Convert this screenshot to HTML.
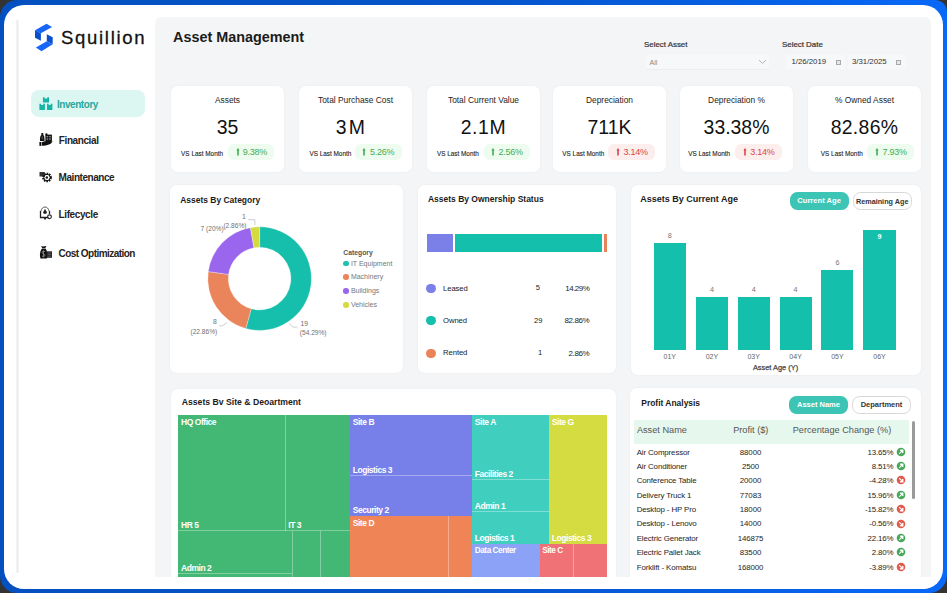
<!DOCTYPE html>
<html><head><meta charset="utf-8"><style>
html,body{margin:0;padding:0;}
body{width:947px;height:593px;position:relative;overflow:hidden;background:#333;font-family:"Liberation Sans", sans-serif;}
.t{position:absolute;line-height:1.15;white-space:nowrap;}
#frame{position:absolute;left:0;top:0;width:947px;height:593px;border-radius:17px 12px 18px 17px;background:linear-gradient(90deg,#0450c0 0%,#0554cb 50%,#0660e4 80%,#0868f8 100%);}
#inner{position:absolute;left:4px;top:4.5px;width:939px;height:584.5px;border-radius:20px;background:#ffffff;}
</style></head><body>
<div id="frame"></div>
<div id="inner"></div>
<div style="position:absolute;left:16.00px;top:20.00px;width:3.00px;height:553.00px;background:linear-gradient(90deg,#f7f7f7,#ebebeb 45%,#f8f8f8);border-radius:0 0 2px 2px;"></div>
<div style="position:absolute;left:155.00px;top:17.00px;width:776.00px;height:560.00px;background:#f4f5f7;border-radius:6px 6px 0 0;"></div>
<svg style="position:absolute;left:30px;top:20px" width="30" height="35" viewBox="0 0 30 35">
<path d="M5,10.3 L16.5,3.8 L22.1,7.1 L10.9,13.3 Z" fill="#1766f5"/>
<path d="M5,10.3 L10.9,13.3 L10.9,20.7 L5,17.7 Z" fill="#0b4fcc"/>
<path d="M16.8,14.2 L22.7,17.3 L22.7,24.3 L16.8,21.2 Z" fill="#0b4fcc"/>
<path d="M5.9,27.5 L16.8,21.2 L22.7,24.3 L11.5,31.3 Z" fill="#1766f5"/>
</svg>
<div class="t" style="left:61.00px;top:27.20px;font-size:18.5px;font-weight:400;color:#111111;letter-spacing:1.7px;-webkit-text-stroke:0.3px #111;">Squillion</div>
<div style="position:absolute;left:31.00px;top:90.00px;width:114.00px;height:27.00px;background:#dcf6f2;border-radius:8px;"></div>
<svg style="position:absolute;left:36px;top:94px" width="20" height="20" viewBox="0 0 20 20">
<g fill="#17b5a5">
<path d="M6.9,3.2 H8.6 V4.4 H11.3 V3.2 H13 V8.4 H6.9 Z"/>
<path d="M3.4,9.8 H5.1 V11 H7.2 V9.8 H8.9 V15.9 H3.4 Z"/>
<path d="M11,9.8 H12.7 V11 H14.7 V9.8 H16.4 V15.9 H11 Z"/>
</g></svg>
<div class="t" style="left:57.00px;top:98.73px;font-size:10px;font-weight:700;color:#2aa89d;letter-spacing:-0.45px;">Inventory</div>
<svg style="position:absolute;left:36px;top:129px" width="20" height="20" viewBox="0 0 20 20">
<g fill="#111">
<path d="M5.4,4 H7.3 V6 C8.3,6.8 8.6,8.2 8.5,12 H4 C3.9,8.2 4.3,6.8 5.4,6 Z"/>
<circle cx="10.4" cy="5.4" r="1.1"/>
<path d="M9.4,5.6 H15.9 V12 H9.4 Z"/>
<path d="M3.4,13 H5.1 V16.9 H3.4 Z"/>
<path d="M5.6,13.2 C8.5,11.8 12.5,11.6 16.5,12.3 C15.5,15.2 11.5,16.8 5.6,16.8 Z"/>
</g>
<path d="M6.2,7.4 V10.2" stroke="#888" stroke-width="0.7"/>
<g fill="#8a8a8a"><rect x="10.6" y="7" width="1.6" height="1.4"/><rect x="13.2" y="7" width="1.6" height="1.4"/><rect x="10.6" y="9.4" width="1.6" height="1.4"/><rect x="13.2" y="9.4" width="1.6" height="1.4"/></g>
</svg>
<div class="t" style="left:58.80px;top:134.73px;font-size:10px;font-weight:700;color:#252423;letter-spacing:-0.4px;">Financial</div>
<svg style="position:absolute;left:36px;top:166px" width="20" height="20" viewBox="0 0 20 20">
<path d="M3.5,6 H8.8 V10.5 H3.5 Z" fill="#333"/>
<circle cx="11" cy="11.5" r="3.9" fill="none" stroke="#111" stroke-width="1.9" stroke-dasharray="1.6 0.9"/>
<circle cx="11" cy="11.5" r="3.2" fill="none" stroke="#111" stroke-width="1"/>
<circle cx="10.8" cy="11.5" r="1.2" fill="#111"/>
</svg>
<div class="t" style="left:58.60px;top:171.93px;font-size:10px;font-weight:700;color:#252423;letter-spacing:-0.45px;">Maintenance</div>
<svg style="position:absolute;left:36px;top:203px" width="20" height="20" viewBox="0 0 20 20">
<path d="M5,8 C5.5,5.5 7,4 9,4 C11,4 12.5,5.5 13,8" fill="none" stroke="#444" stroke-width="0.9"/>
<path d="M4.5,8 V14.5 H12.5" fill="none" stroke="#222" stroke-width="1.3"/>
<path d="M13.5,8 V11" fill="none" stroke="#222" stroke-width="1.3"/>
<circle cx="9" cy="9.3" r="1.8" fill="#222"/><path d="M8.2,6.5 H9.8 V8 H8.2Z" fill="#222"/>
<circle cx="13.5" cy="13.8" r="1.9" fill="none" stroke="#222" stroke-width="1.1"/>
<rect x="8" y="14.8" width="2" height="1.6" fill="#222"/>
</svg>
<div class="t" style="left:58.60px;top:208.83px;font-size:10px;font-weight:700;color:#252423;letter-spacing:-0.4px;">Lifecycle</div>
<svg style="position:absolute;left:36px;top:242px" width="20" height="20" viewBox="0 0 20 20">
<path d="M5,4 C6,4.6 8,4.6 10.5,4 L9.3,6 H6.2 Z" fill="#111"/>
<path d="M6,6.5 H9.5 C11.5,8.5 11.5,14 10.8,16.5 H4.5 C3.5,14 3.8,9 6,6.5 Z" fill="#111"/>
<path d="M9,9.9 C8.6,9 6.1,9 6.1,10.5 C6.1,12 9,11.7 9,13.3 C9,14.8 6.3,14.8 5.9,13.8 M7.5,8.4 V15.4" fill="none" stroke="#8a8a8a" stroke-width="0.9"/>
<path d="M10.8,9.3 H16 V15.8 H10.8 Z" fill="#222"/>
<path d="M11.5,10.8 H15.3 M11.5,12.5 H15.3 M11.5,14.2 H15.3" stroke="#777" stroke-width="0.6"/>
</svg>
<div class="t" style="left:58.60px;top:247.63px;font-size:10px;font-weight:700;color:#252423;letter-spacing:-0.55px;">Cost Optimization</div>
<div class="t" style="left:173.00px;top:29.48px;font-size:14.4px;font-weight:700;color:#1b1b1b;">Asset Management</div>
<div class="t" style="left:644.00px;top:40.20px;font-size:7.9px;font-weight:400;color:#333;-webkit-text-stroke:0.2px #333;">Select Asset</div>
<div style="position:absolute;left:646.00px;top:54.50px;width:122.50px;height:14.00px;background:#f7f8fa;border-bottom:1px solid #eceef0;"></div>
<div class="t" style="left:649.50px;top:58.70px;font-size:7px;font-weight:400;color:#8a8a8a;">All</div>
<svg style="position:absolute;left:758px;top:59px" width="9" height="6" viewBox="0 0 9 6"><path d="M1,1 L4.5,4.5 L8,1" fill="none" stroke="#aaa" stroke-width="0.9"/></svg>
<div class="t" style="left:782.00px;top:39.70px;font-size:7.9px;font-weight:400;color:#333;-webkit-text-stroke:0.2px #333;">Select Date</div>
<div style="position:absolute;left:786.00px;top:54.50px;width:58.50px;height:14.50px;background:#f7f8fa;"></div>
<div style="position:absolute;left:847.50px;top:54.50px;width:58.00px;height:14.50px;background:#f7f8fa;"></div>
<div class="t" style="left:791.40px;top:58.46px;font-size:7.8px;font-weight:400;color:#333;">1/26/2019</div>
<div class="t" style="left:852.00px;top:58.46px;font-size:7.8px;font-weight:400;color:#333;">3/31/2025</div>
<div style="position:absolute;left:835.6px;top:59.8px;width:5.4px;height:5.4px;box-sizing:border-box;border:0.9px solid #a9a9a9;background:#e6e6e6;"></div>
<div style="position:absolute;left:896.1px;top:59.8px;width:5.4px;height:5.4px;box-sizing:border-box;border:0.9px solid #a9a9a9;background:#e6e6e6;"></div>
<div style="position:absolute;left:171.00px;top:86.00px;width:113.00px;height:85.50px;background:#ffffff;border-radius:7px;box-shadow:0 0 3px rgba(0,0,0,0.045);"></div>
<div class="t" style="left:-72.50px;width:600px;text-align:center;top:95.52px;font-size:8.4px;font-weight:400;color:#252423;">Assets</div>
<div class="t" style="left:-72.50px;width:600px;text-align:center;top:115.59px;font-size:19.4px;font-weight:400;color:#111;letter-spacing:0px;">35</div>
<div class="t" style="left:181.10px;top:149.94px;font-size:6.4px;font-weight:400;color:#222;-webkit-text-stroke:0.1px #222;">VS Last Month</div>
<div style="position:absolute;left:227.50px;top:144.20px;width:46.50px;height:16.30px;background:#eefbef;border-radius:6px;"></div>
<svg style="position:absolute;left:235.50px;top:147.6px" width="4" height="8" viewBox="0 0 4 8"><path d="M2,0 L3.6,2.6 L2.8,2.6 L2.8,7.5 L1.2,7.5 L1.2,2.6 L0.4,2.6 Z" fill="#3fae53"/></svg>
<div class="t" style="left:242.80px;top:147.19px;font-size:9px;font-weight:400;color:#3fae53;letter-spacing:-0.25px;">9.38%</div>
<div style="position:absolute;left:299.00px;top:86.00px;width:113.00px;height:85.50px;background:#ffffff;border-radius:7px;box-shadow:0 0 3px rgba(0,0,0,0.045);"></div>
<div class="t" style="left:55.50px;width:600px;text-align:center;top:95.52px;font-size:8.4px;font-weight:400;color:#252423;">Total Purchase Cost</div>
<div class="t" style="left:51.50px;width:600px;text-align:center;top:115.59px;font-size:19.4px;font-weight:400;color:#111;letter-spacing:2.4px;">3M</div>
<div class="t" style="left:309.40px;top:149.94px;font-size:6.4px;font-weight:400;color:#222;-webkit-text-stroke:0.1px #222;">VS Last Month</div>
<div style="position:absolute;left:355.10px;top:144.20px;width:46.50px;height:16.30px;background:#eefbef;border-radius:6px;"></div>
<svg style="position:absolute;left:362.20px;top:147.6px" width="4" height="8" viewBox="0 0 4 8"><path d="M2,0 L3.6,2.6 L2.8,2.6 L2.8,7.5 L1.2,7.5 L1.2,2.6 L0.4,2.6 Z" fill="#3fae53"/></svg>
<div class="t" style="left:370.00px;top:147.19px;font-size:9px;font-weight:400;color:#3fae53;letter-spacing:-0.25px;">5.26%</div>
<div style="position:absolute;left:427.00px;top:86.00px;width:113.00px;height:85.50px;background:#ffffff;border-radius:7px;box-shadow:0 0 3px rgba(0,0,0,0.045);"></div>
<div class="t" style="left:183.50px;width:600px;text-align:center;top:95.52px;font-size:8.4px;font-weight:400;color:#252423;">Total Current Value</div>
<div class="t" style="left:183.40px;width:600px;text-align:center;top:115.59px;font-size:19.4px;font-weight:400;color:#111;letter-spacing:0.6px;">2.1M</div>
<div class="t" style="left:436.90px;top:149.94px;font-size:6.4px;font-weight:400;color:#222;-webkit-text-stroke:0.1px #222;">VS Last Month</div>
<div style="position:absolute;left:483.80px;top:144.20px;width:46.50px;height:16.30px;background:#eefbef;border-radius:6px;"></div>
<svg style="position:absolute;left:490.90px;top:147.6px" width="4" height="8" viewBox="0 0 4 8"><path d="M2,0 L3.6,2.6 L2.8,2.6 L2.8,7.5 L1.2,7.5 L1.2,2.6 L0.4,2.6 Z" fill="#3fae53"/></svg>
<div class="t" style="left:498.50px;top:147.19px;font-size:9px;font-weight:400;color:#3fae53;letter-spacing:-0.25px;">2.56%</div>
<div style="position:absolute;left:553.00px;top:86.00px;width:113.00px;height:85.50px;background:#ffffff;border-radius:7px;box-shadow:0 0 3px rgba(0,0,0,0.045);"></div>
<div class="t" style="left:309.50px;width:600px;text-align:center;top:95.52px;font-size:8.4px;font-weight:400;color:#252423;">Depreciation</div>
<div class="t" style="left:309.50px;width:600px;text-align:center;top:115.59px;font-size:19.4px;font-weight:400;color:#111;letter-spacing:0px;">711K</div>
<div class="t" style="left:562.30px;top:149.94px;font-size:6.4px;font-weight:400;color:#222;-webkit-text-stroke:0.1px #222;">VS Last Month</div>
<div style="position:absolute;left:608.00px;top:144.20px;width:46.50px;height:16.30px;background:#fdeeee;border-radius:6px;"></div>
<svg style="position:absolute;left:616.30px;top:147.6px" width="4" height="8" viewBox="0 0 4 8"><path d="M2,0 L3.6,2.6 L2.8,2.6 L2.8,7.5 L1.2,7.5 L1.2,2.6 L0.4,2.6 Z" fill="#d6474a"/></svg>
<div class="t" style="left:623.50px;top:147.19px;font-size:9px;font-weight:400;color:#d6474a;letter-spacing:-0.25px;">3.14%</div>
<div style="position:absolute;left:680.00px;top:86.00px;width:113.00px;height:85.50px;background:#ffffff;border-radius:7px;box-shadow:0 0 3px rgba(0,0,0,0.045);"></div>
<div class="t" style="left:436.50px;width:600px;text-align:center;top:95.52px;font-size:8.4px;font-weight:400;color:#252423;">Depreciation %</div>
<div class="t" style="left:436.50px;width:600px;text-align:center;top:115.59px;font-size:19.4px;font-weight:400;color:#111;letter-spacing:0px;">33.38%</div>
<div class="t" style="left:688.20px;top:149.94px;font-size:6.4px;font-weight:400;color:#222;-webkit-text-stroke:0.1px #222;">VS Last Month</div>
<div style="position:absolute;left:735.30px;top:144.20px;width:46.50px;height:16.30px;background:#fdeeee;border-radius:6px;"></div>
<svg style="position:absolute;left:743.40px;top:147.6px" width="4" height="8" viewBox="0 0 4 8"><path d="M2,0 L3.6,2.6 L2.8,2.6 L2.8,7.5 L1.2,7.5 L1.2,2.6 L0.4,2.6 Z" fill="#d6474a"/></svg>
<div class="t" style="left:750.20px;top:147.19px;font-size:9px;font-weight:400;color:#d6474a;letter-spacing:-0.25px;">3.14%</div>
<div style="position:absolute;left:808.00px;top:86.00px;width:113.00px;height:85.50px;background:#ffffff;border-radius:7px;box-shadow:0 0 3px rgba(0,0,0,0.045);"></div>
<div class="t" style="left:564.50px;width:600px;text-align:center;top:95.52px;font-size:8.4px;font-weight:400;color:#252423;">% Owned Asset</div>
<div class="t" style="left:564.50px;width:600px;text-align:center;top:115.59px;font-size:19.4px;font-weight:400;color:#111;letter-spacing:0.3px;">82.86%</div>
<div class="t" style="left:820.80px;top:149.94px;font-size:6.4px;font-weight:400;color:#222;-webkit-text-stroke:0.1px #222;">VS Last Month</div>
<div style="position:absolute;left:867.30px;top:144.20px;width:46.50px;height:16.30px;background:#eefbef;border-radius:6px;"></div>
<svg style="position:absolute;left:875.40px;top:147.6px" width="4" height="8" viewBox="0 0 4 8"><path d="M2,0 L3.6,2.6 L2.8,2.6 L2.8,7.5 L1.2,7.5 L1.2,2.6 L0.4,2.6 Z" fill="#3fae53"/></svg>
<div class="t" style="left:882.50px;top:147.19px;font-size:9px;font-weight:400;color:#3fae53;letter-spacing:-0.25px;">7.93%</div>
<div style="position:absolute;left:170.00px;top:185.00px;width:233.00px;height:188.00px;background:#ffffff;border-radius:7px;box-shadow:0 0 3px rgba(0,0,0,0.045);"></div>
<div class="t" style="left:180.20px;top:196.28px;font-size:8.47px;font-weight:700;color:#1b1b1b;">Assets By Category</div>
<svg style="position:absolute;left:0;top:0" width="947" height="593"><path d="M259.60,226.80 A51.8,51.8 0 1 1 245.81,328.53 L251.26,308.77 A31.3,31.3 0 1 0 259.60,247.30 Z" fill="#16bfab" stroke="#fff" stroke-width="0.3"/><path d="M245.81,328.53 A51.8,51.8 0 0 1 208.27,271.62 L228.59,274.38 A31.3,31.3 0 0 0 251.26,308.77 Z" fill="#ea845a" stroke="#fff" stroke-width="0.3"/><path d="M208.27,271.62 A51.8,51.8 0 0 1 250.37,227.63 L254.02,247.80 A31.3,31.3 0 0 0 228.59,274.38 Z" fill="#9a66ee" stroke="#fff" stroke-width="0.3"/><path d="M250.37,227.63 A51.8,51.8 0 0 1 259.63,226.80 L259.62,247.30 A31.3,31.3 0 0 0 254.02,247.80 Z" fill="#d5db3f" stroke="#fff" stroke-width="0.3"/><path d="M248.2,219.7 H254.9 V225" fill="none" stroke="#aaa" stroke-width="0.6"/>
<path d="M219.1,325.8 H222.5 L227,322.7" fill="none" stroke="#aaa" stroke-width="0.6"/>
<path d="M288.8,323.5 L293,327.1 H297.5" fill="none" stroke="#aaa" stroke-width="0.6"/></svg>
<div class="t" style="left:-56.00px;width:600px;text-align:center;top:213.11px;font-size:6.8px;font-weight:400;color:#707070;">1</div>
<div class="t" style="left:200.60px;top:224.62px;font-size:6.6px;font-weight:400;color:#707070;">7 (20%)</div>
<div class="t" style="left:223.40px;top:221.82px;font-size:6.6px;font-weight:400;color:#707070;">(2.86%)</div>
<div class="t" style="left:-85.20px;width:600px;text-align:center;top:318.21px;font-size:6.8px;font-weight:400;color:#707070;">8</div>
<div class="t" style="left:190.50px;top:327.82px;font-size:6.6px;font-weight:400;color:#707070;">(22.86%)</div>
<div class="t" style="left:300.40px;top:319.81px;font-size:6.8px;font-weight:400;color:#707070;">19</div>
<div class="t" style="left:299.80px;top:328.62px;font-size:6.6px;font-weight:400;color:#707070;">(54.29%)</div>
<div class="t" style="left:343.30px;top:248.51px;font-size:6.8px;font-weight:700;color:#555;">Category</div>
<div style="position:absolute;left:343.40px;top:260.60px;width:5.6px;height:5.6px;border-radius:50%;background:#1dbfad"></div>
<div class="t" style="left:350.90px;top:259.50px;font-size:7px;font-weight:400;color:#777;">IT Equipment</div>
<div style="position:absolute;left:343.40px;top:274.30px;width:5.6px;height:5.6px;border-radius:50%;background:#ea845a"></div>
<div class="t" style="left:350.90px;top:273.20px;font-size:7px;font-weight:400;color:#777;">Machinery</div>
<div style="position:absolute;left:343.40px;top:288.20px;width:5.6px;height:5.6px;border-radius:50%;background:#9a66ee"></div>
<div class="t" style="left:350.90px;top:287.10px;font-size:7px;font-weight:400;color:#777;">Buildings</div>
<div style="position:absolute;left:343.40px;top:302.00px;width:5.6px;height:5.6px;border-radius:50%;background:#d5db3f"></div>
<div class="t" style="left:350.90px;top:300.90px;font-size:7px;font-weight:400;color:#777;">Vehicles</div>
<div style="position:absolute;left:417.50px;top:185.00px;width:198.50px;height:187.50px;background:#ffffff;border-radius:7px;box-shadow:0 0 3px rgba(0,0,0,0.045);"></div>
<div class="t" style="left:427.90px;top:195.27px;font-size:8.5px;font-weight:700;color:#1b1b1b;">Assets By Ownership Status</div>
<div style="position:absolute;left:427.20px;top:233.80px;width:25.80px;height:18.20px;background:#7b7fe8;"></div>
<div style="position:absolute;left:454.50px;top:233.80px;width:147.70px;height:18.20px;background:#14bfac;"></div>
<div style="position:absolute;left:603.90px;top:233.80px;width:3.60px;height:18.20px;background:#e9845a;"></div>
<div style="position:absolute;left:426.30px;top:283.80px;width:9.4px;height:9.4px;border-radius:50%;background:#7b7fe8"></div>
<div class="t" style="left:443.10px;top:284.51px;font-size:7.7px;font-weight:400;color:#1a1a1a;letter-spacing:-0.1px;">Leased</div>
<div class="t" style="left:237.90px;width:600px;text-align:center;top:284.37px;font-size:7.6px;font-weight:400;color:#252423;">5</div>
<div class="t" style="left:-10.80px;width:600px;text-align:right;top:283.94px;font-size:8.0px;font-weight:400;color:#252423;letter-spacing:-0.55px;">14.29%</div>
<div style="position:absolute;left:426.30px;top:316.10px;width:9.4px;height:9.4px;border-radius:50%;background:#14bfac"></div>
<div class="t" style="left:443.10px;top:316.81px;font-size:7.7px;font-weight:400;color:#1a1a1a;letter-spacing:-0.1px;">Owned</div>
<div class="t" style="left:238.30px;width:600px;text-align:center;top:316.67px;font-size:7.6px;font-weight:400;color:#252423;">29</div>
<div class="t" style="left:-10.80px;width:600px;text-align:right;top:316.24px;font-size:8.0px;font-weight:400;color:#252423;letter-spacing:-0.4px;">82.86%</div>
<div style="position:absolute;left:426.30px;top:348.50px;width:9.4px;height:9.4px;border-radius:50%;background:#e9845a"></div>
<div class="t" style="left:443.10px;top:349.21px;font-size:7.7px;font-weight:400;color:#1a1a1a;letter-spacing:-0.1px;">Rented</div>
<div class="t" style="left:240.20px;width:600px;text-align:center;top:349.07px;font-size:7.6px;font-weight:400;color:#252423;">1</div>
<div class="t" style="left:-10.80px;width:600px;text-align:right;top:348.64px;font-size:8.0px;font-weight:400;color:#252423;letter-spacing:-0.4px;">2.86%</div>
<div style="position:absolute;left:631.00px;top:185.00px;width:290.30px;height:189.50px;background:#ffffff;border-radius:7px;box-shadow:0 0 3px rgba(0,0,0,0.045);"></div>
<div class="t" style="left:640.20px;top:194.49px;font-size:9px;font-weight:700;color:#1b1b1b;">Assets By Current Age</div>
<div style="position:absolute;left:789.60px;top:191.80px;width:59.00px;height:17.90px;background:#3cc4b4;border-radius:7.5px;"></div>
<div class="t" style="left:519.10px;width:600px;text-align:center;top:197.37px;font-size:7.6px;font-weight:700;color:#ffffff;">Current Age</div>
<div style="position:absolute;left:852.70px;top:191.80px;width:59.00px;height:17.90px;background:#ffffff;border-radius:7.5px;box-sizing:border-box;border:1px solid #d8d8d8;"></div>
<div class="t" style="left:582.20px;width:600px;text-align:center;top:197.56px;font-size:7.25px;font-weight:700;color:#333;">Remaining Age</div>
<div style="position:absolute;left:653.70px;top:242.94px;width:32.20px;height:107.36px;background:#14bfac;"></div>
<div class="t" style="left:369.80px;width:600px;text-align:center;top:232.13px;font-size:7.2px;font-weight:400;color:#777;">8</div>
<div class="t" style="left:369.80px;width:600px;text-align:center;top:353.10px;font-size:7px;font-weight:400;color:#666;">01Y</div>
<div style="position:absolute;left:695.80px;top:296.62px;width:32.20px;height:53.68px;background:#14bfac;"></div>
<div class="t" style="left:411.90px;width:600px;text-align:center;top:285.81px;font-size:7.2px;font-weight:400;color:#777;">4</div>
<div class="t" style="left:411.90px;width:600px;text-align:center;top:353.10px;font-size:7px;font-weight:400;color:#666;">02Y</div>
<div style="position:absolute;left:737.60px;top:296.62px;width:32.20px;height:53.68px;background:#14bfac;"></div>
<div class="t" style="left:453.70px;width:600px;text-align:center;top:285.81px;font-size:7.2px;font-weight:400;color:#777;">4</div>
<div class="t" style="left:453.70px;width:600px;text-align:center;top:353.10px;font-size:7px;font-weight:400;color:#666;">03Y</div>
<div style="position:absolute;left:779.50px;top:296.62px;width:32.20px;height:53.68px;background:#14bfac;"></div>
<div class="t" style="left:495.60px;width:600px;text-align:center;top:285.81px;font-size:7.2px;font-weight:400;color:#777;">4</div>
<div class="t" style="left:495.60px;width:600px;text-align:center;top:353.10px;font-size:7px;font-weight:400;color:#666;">04Y</div>
<div style="position:absolute;left:821.30px;top:269.78px;width:32.20px;height:80.52px;background:#14bfac;"></div>
<div class="t" style="left:537.40px;width:600px;text-align:center;top:258.97px;font-size:7.2px;font-weight:400;color:#777;">6</div>
<div class="t" style="left:537.40px;width:600px;text-align:center;top:353.10px;font-size:7px;font-weight:400;color:#666;">05Y</div>
<div style="position:absolute;left:863.40px;top:229.52px;width:32.20px;height:120.78px;background:#14bfac;"></div>
<div class="t" style="left:579.50px;width:600px;text-align:center;top:233.31px;font-size:7.2px;font-weight:700;color:#ffffff;">9</div>
<div class="t" style="left:579.50px;width:600px;text-align:center;top:353.10px;font-size:7px;font-weight:400;color:#666;">06Y</div>
<div class="t" style="left:475.50px;width:600px;text-align:center;top:363.68px;font-size:7.4px;font-weight:400;color:#444;-webkit-text-stroke:0.25px #444;">Asset Age (Y)</div>
<div style="position:absolute;left:170.80px;top:388.80px;width:444.80px;height:188.20px;background:#ffffff;border-radius:7px 7px 0 0;box-shadow:0 0 3px rgba(0,0,0,0.045);"></div>
<div class="t" style="left:181.70px;top:397.97px;font-size:8.67px;font-weight:700;color:#1b1b1b;">Assets Bv Site &amp; Deoartment</div>
<div style="position:absolute;left:178.00px;top:415.00px;width:172.00px;height:162.00px;background:#43b874;"></div>
<div style="position:absolute;left:350.00px;top:415.00px;width:122.00px;height:101.00px;background:#7680e8;"></div>
<div style="position:absolute;left:350.00px;top:516.00px;width:122.00px;height:61.00px;background:#ef8456;"></div>
<div style="position:absolute;left:472.00px;top:415.00px;width:77.00px;height:128.50px;background:#40cfbf;"></div>
<div style="position:absolute;left:549.00px;top:415.00px;width:58.00px;height:128.50px;background:#d4dc42;"></div>
<div style="position:absolute;left:472.00px;top:543.50px;width:67.50px;height:33.50px;background:#8ba2f6;"></div>
<div style="position:absolute;left:539.50px;top:543.50px;width:67.50px;height:33.50px;background:#f07277;"></div>
<div style="position:absolute;left:285.00px;top:415.00px;width:1.00px;height:115.50px;background:rgba(255,255,255,0.33);"></div>
<div style="position:absolute;left:178.00px;top:530.00px;width:172.00px;height:1.00px;background:rgba(255,255,255,0.33);"></div>
<div style="position:absolute;left:292.00px;top:530.50px;width:1.00px;height:46.50px;background:rgba(255,255,255,0.33);"></div>
<div style="position:absolute;left:320.00px;top:530.50px;width:1.00px;height:46.50px;background:rgba(255,255,255,0.33);"></div>
<div style="position:absolute;left:178.00px;top:573.00px;width:114.00px;height:1.00px;background:rgba(255,255,255,0.33);"></div>
<div style="position:absolute;left:350.00px;top:475.00px;width:122.00px;height:1.00px;background:rgba(255,255,255,0.33);"></div>
<div style="position:absolute;left:447.50px;top:516.00px;width:1.00px;height:61.00px;background:rgba(255,255,255,0.33);"></div>
<div style="position:absolute;left:472.00px;top:478.50px;width:77.00px;height:1.00px;background:rgba(255,255,255,0.33);"></div>
<div style="position:absolute;left:472.00px;top:511.00px;width:77.00px;height:1.00px;background:rgba(255,255,255,0.33);"></div>
<div style="position:absolute;left:572.50px;top:543.50px;width:1.00px;height:33.50px;background:rgba(255,255,255,0.33);"></div>
<div class="t" style="left:181.00px;top:418.27px;font-size:8.5px;font-weight:700;color:#ffffff;letter-spacing:-0.45px;">HQ Office</div>
<div class="t" style="left:181.00px;top:520.77px;font-size:8.5px;font-weight:700;color:#ffffff;letter-spacing:-0.45px;">HR 5</div>
<div class="t" style="left:288.30px;top:520.77px;font-size:8.5px;font-weight:700;color:#ffffff;letter-spacing:-0.45px;">IT 3</div>
<div class="t" style="left:181.00px;top:564.27px;font-size:8.5px;font-weight:700;color:#ffffff;letter-spacing:-0.45px;">Admin 2</div>
<div class="t" style="left:352.70px;top:418.27px;font-size:8.5px;font-weight:700;color:#ffffff;letter-spacing:-0.45px;">Site B</div>
<div class="t" style="left:352.70px;top:465.77px;font-size:8.5px;font-weight:700;color:#ffffff;letter-spacing:-0.45px;">Logistics 3</div>
<div class="t" style="left:352.70px;top:506.47px;font-size:8.5px;font-weight:700;color:#ffffff;letter-spacing:-0.45px;">Security 2</div>
<div class="t" style="left:352.70px;top:518.77px;font-size:8.5px;font-weight:700;color:#ffffff;letter-spacing:-0.45px;">Site D</div>
<div class="t" style="left:474.80px;top:418.27px;font-size:8.5px;font-weight:700;color:#ffffff;letter-spacing:-0.45px;">Site A</div>
<div class="t" style="left:474.80px;top:469.77px;font-size:8.5px;font-weight:700;color:#ffffff;letter-spacing:-0.45px;">Facilities 2</div>
<div class="t" style="left:474.80px;top:501.57px;font-size:8.5px;font-weight:700;color:#ffffff;letter-spacing:-0.45px;">Admin 1</div>
<div class="t" style="left:474.80px;top:534.27px;font-size:8.5px;font-weight:700;color:#ffffff;letter-spacing:-0.45px;">Logistics 1</div>
<div class="t" style="left:551.80px;top:418.27px;font-size:8.5px;font-weight:700;color:#ffffff;letter-spacing:-0.45px;">Site G</div>
<div class="t" style="left:551.80px;top:534.27px;font-size:8.5px;font-weight:700;color:#ffffff;letter-spacing:-0.45px;">Logistics 3</div>
<div class="t" style="left:474.80px;top:546.43px;font-size:8.2px;font-weight:700;color:#ffffff;letter-spacing:-0.45px;">Data Center</div>
<div class="t" style="left:542.20px;top:546.43px;font-size:8.2px;font-weight:700;color:#ffffff;letter-spacing:-0.45px;">Site C</div>
<div style="position:absolute;left:629.60px;top:387.50px;width:291.40px;height:189.50px;background:#ffffff;border-radius:7px 7px 0 0;box-shadow:0 0 3px rgba(0,0,0,0.045);"></div>
<div class="t" style="left:641.30px;top:399.49px;font-size:8.45px;font-weight:700;color:#1b1b1b;">Profit Analysis</div>
<div style="position:absolute;left:788.90px;top:395.50px;width:59.20px;height:18.00px;background:#3cc4b4;border-radius:7.5px;"></div>
<div class="t" style="left:518.50px;width:600px;text-align:center;top:401.32px;font-size:7.5px;font-weight:700;color:#fff;">Asset Name</div>
<div style="position:absolute;left:852.00px;top:395.50px;width:58.90px;height:18.00px;background:#ffffff;border-radius:7.5px;box-sizing:border-box;border:1px solid #d8d8d8;"></div>
<div class="t" style="left:581.50px;width:600px;text-align:center;top:401.32px;font-size:7.5px;font-weight:700;color:#333;">Department</div>
<div style="position:absolute;left:634.30px;top:419.80px;width:275.00px;height:24.20px;background:#e6f8ee;"></div>
<div class="t" style="left:636.90px;top:424.68px;font-size:9.2px;font-weight:400;color:#555;">Asset Name</div>
<div class="t" style="left:450.80px;width:600px;text-align:center;top:424.68px;font-size:9.2px;font-weight:400;color:#555;">Profit ($)</div>
<div class="t" style="left:792.70px;top:424.68px;font-size:9.2px;font-weight:400;color:#555;">Percentage Change (%)</div>
<div style="position:absolute;left:912.00px;top:421.30px;width:3.30px;height:77.30px;background:#9a9a9a;border-radius:1.5px;"></div>
<div class="t" style="left:636.70px;top:447.60px;font-size:7.9px;font-weight:400;color:#1e1e1e;letter-spacing:-0.12px;">Air Compressor</div>
<div class="t" style="left:450.50px;width:600px;text-align:center;top:447.60px;font-size:7.9px;font-weight:400;color:#1e1e1e;letter-spacing:-0.12px;">88000</div>
<div class="t" style="left:293.50px;width:600px;text-align:right;top:447.60px;font-size:7.9px;font-weight:400;color:#1e1e1e;letter-spacing:-0.12px;">13.65%</div>
<svg style="position:absolute;left:896.3px;top:446.70px" width="10" height="10" viewBox="-5 -5 10 10"><circle r="4.3" fill="#47a85a"/><path d="M-1.8,1.8 L0.9,-0.9 M-0.6,-1.9 H1.9 V0.6 Z" fill="#fff" stroke="#fff" stroke-width="1.1" stroke-linejoin="round"/></svg>
<div class="t" style="left:636.70px;top:461.97px;font-size:7.9px;font-weight:400;color:#1e1e1e;letter-spacing:-0.12px;">Air Conditioner</div>
<div class="t" style="left:450.50px;width:600px;text-align:center;top:461.97px;font-size:7.9px;font-weight:400;color:#1e1e1e;letter-spacing:-0.12px;">2500</div>
<div class="t" style="left:293.50px;width:600px;text-align:right;top:461.97px;font-size:7.9px;font-weight:400;color:#1e1e1e;letter-spacing:-0.12px;">8.51%</div>
<svg style="position:absolute;left:896.3px;top:461.07px" width="10" height="10" viewBox="-5 -5 10 10"><circle r="4.3" fill="#47a85a"/><path d="M-1.8,1.8 L0.9,-0.9 M-0.6,-1.9 H1.9 V0.6 Z" fill="#fff" stroke="#fff" stroke-width="1.1" stroke-linejoin="round"/></svg>
<div class="t" style="left:636.70px;top:476.34px;font-size:7.9px;font-weight:400;color:#1e1e1e;letter-spacing:-0.12px;">Conference Table</div>
<div class="t" style="left:450.50px;width:600px;text-align:center;top:476.34px;font-size:7.9px;font-weight:400;color:#1e1e1e;letter-spacing:-0.12px;">20000</div>
<div class="t" style="left:293.50px;width:600px;text-align:right;top:476.34px;font-size:7.9px;font-weight:400;color:#1e1e1e;letter-spacing:-0.12px;">-4.28%</div>
<svg style="position:absolute;left:896.3px;top:475.44px" width="10" height="10" viewBox="-5 -5 10 10"><circle r="4.3" fill="#e25a4c"/><path d="M-1.8,-1.8 L0.9,0.9 M-0.6,1.9 H1.9 V-0.6 Z" fill="#fff" stroke="#fff" stroke-width="1.1" stroke-linejoin="round"/></svg>
<div class="t" style="left:636.70px;top:490.71px;font-size:7.9px;font-weight:400;color:#1e1e1e;letter-spacing:-0.12px;">Delivery Truck 1</div>
<div class="t" style="left:450.50px;width:600px;text-align:center;top:490.71px;font-size:7.9px;font-weight:400;color:#1e1e1e;letter-spacing:-0.12px;">77083</div>
<div class="t" style="left:293.50px;width:600px;text-align:right;top:490.71px;font-size:7.9px;font-weight:400;color:#1e1e1e;letter-spacing:-0.12px;">15.96%</div>
<svg style="position:absolute;left:896.3px;top:489.81px" width="10" height="10" viewBox="-5 -5 10 10"><circle r="4.3" fill="#47a85a"/><path d="M-1.8,1.8 L0.9,-0.9 M-0.6,-1.9 H1.9 V0.6 Z" fill="#fff" stroke="#fff" stroke-width="1.1" stroke-linejoin="round"/></svg>
<div class="t" style="left:636.70px;top:505.08px;font-size:7.9px;font-weight:400;color:#1e1e1e;letter-spacing:-0.12px;">Desktop - HP Pro</div>
<div class="t" style="left:450.50px;width:600px;text-align:center;top:505.08px;font-size:7.9px;font-weight:400;color:#1e1e1e;letter-spacing:-0.12px;">18000</div>
<div class="t" style="left:293.50px;width:600px;text-align:right;top:505.08px;font-size:7.9px;font-weight:400;color:#1e1e1e;letter-spacing:-0.12px;">-15.82%</div>
<svg style="position:absolute;left:896.3px;top:504.18px" width="10" height="10" viewBox="-5 -5 10 10"><circle r="4.3" fill="#e25a4c"/><path d="M-1.8,-1.8 L0.9,0.9 M-0.6,1.9 H1.9 V-0.6 Z" fill="#fff" stroke="#fff" stroke-width="1.1" stroke-linejoin="round"/></svg>
<div class="t" style="left:636.70px;top:519.45px;font-size:7.9px;font-weight:400;color:#1e1e1e;letter-spacing:-0.12px;">Desktop - Lenovo</div>
<div class="t" style="left:450.50px;width:600px;text-align:center;top:519.45px;font-size:7.9px;font-weight:400;color:#1e1e1e;letter-spacing:-0.12px;">14000</div>
<div class="t" style="left:293.50px;width:600px;text-align:right;top:519.45px;font-size:7.9px;font-weight:400;color:#1e1e1e;letter-spacing:-0.12px;">-0.56%</div>
<svg style="position:absolute;left:896.3px;top:518.55px" width="10" height="10" viewBox="-5 -5 10 10"><circle r="4.3" fill="#e25a4c"/><path d="M-1.8,-1.8 L0.9,0.9 M-0.6,1.9 H1.9 V-0.6 Z" fill="#fff" stroke="#fff" stroke-width="1.1" stroke-linejoin="round"/></svg>
<div class="t" style="left:636.70px;top:533.82px;font-size:7.9px;font-weight:400;color:#1e1e1e;letter-spacing:-0.12px;">Electric Generator</div>
<div class="t" style="left:450.50px;width:600px;text-align:center;top:533.82px;font-size:7.9px;font-weight:400;color:#1e1e1e;letter-spacing:-0.12px;">146875</div>
<div class="t" style="left:293.50px;width:600px;text-align:right;top:533.82px;font-size:7.9px;font-weight:400;color:#1e1e1e;letter-spacing:-0.12px;">22.16%</div>
<svg style="position:absolute;left:896.3px;top:532.92px" width="10" height="10" viewBox="-5 -5 10 10"><circle r="4.3" fill="#47a85a"/><path d="M-1.8,1.8 L0.9,-0.9 M-0.6,-1.9 H1.9 V0.6 Z" fill="#fff" stroke="#fff" stroke-width="1.1" stroke-linejoin="round"/></svg>
<div class="t" style="left:636.70px;top:548.19px;font-size:7.9px;font-weight:400;color:#1e1e1e;letter-spacing:-0.12px;">Electric Pallet Jack</div>
<div class="t" style="left:450.50px;width:600px;text-align:center;top:548.19px;font-size:7.9px;font-weight:400;color:#1e1e1e;letter-spacing:-0.12px;">83500</div>
<div class="t" style="left:293.50px;width:600px;text-align:right;top:548.19px;font-size:7.9px;font-weight:400;color:#1e1e1e;letter-spacing:-0.12px;">2.80%</div>
<svg style="position:absolute;left:896.3px;top:547.29px" width="10" height="10" viewBox="-5 -5 10 10"><circle r="4.3" fill="#47a85a"/><path d="M-1.8,1.8 L0.9,-0.9 M-0.6,-1.9 H1.9 V0.6 Z" fill="#fff" stroke="#fff" stroke-width="1.1" stroke-linejoin="round"/></svg>
<div class="t" style="left:636.70px;top:562.56px;font-size:7.9px;font-weight:400;color:#1e1e1e;letter-spacing:-0.12px;">Forklift - Komatsu</div>
<div class="t" style="left:450.50px;width:600px;text-align:center;top:562.56px;font-size:7.9px;font-weight:400;color:#1e1e1e;letter-spacing:-0.12px;">168000</div>
<div class="t" style="left:293.50px;width:600px;text-align:right;top:562.56px;font-size:7.9px;font-weight:400;color:#1e1e1e;letter-spacing:-0.12px;">-3.89%</div>
<svg style="position:absolute;left:896.3px;top:561.66px" width="10" height="10" viewBox="-5 -5 10 10"><circle r="4.3" fill="#e25a4c"/><path d="M-1.8,-1.8 L0.9,0.9 M-0.6,1.9 H1.9 V-0.6 Z" fill="#fff" stroke="#fff" stroke-width="1.1" stroke-linejoin="round"/></svg>
<div style="position:absolute;left:150.00px;top:577.00px;width:775.00px;height:11.50px;background:#ffffff;"></div>
</body></html>
